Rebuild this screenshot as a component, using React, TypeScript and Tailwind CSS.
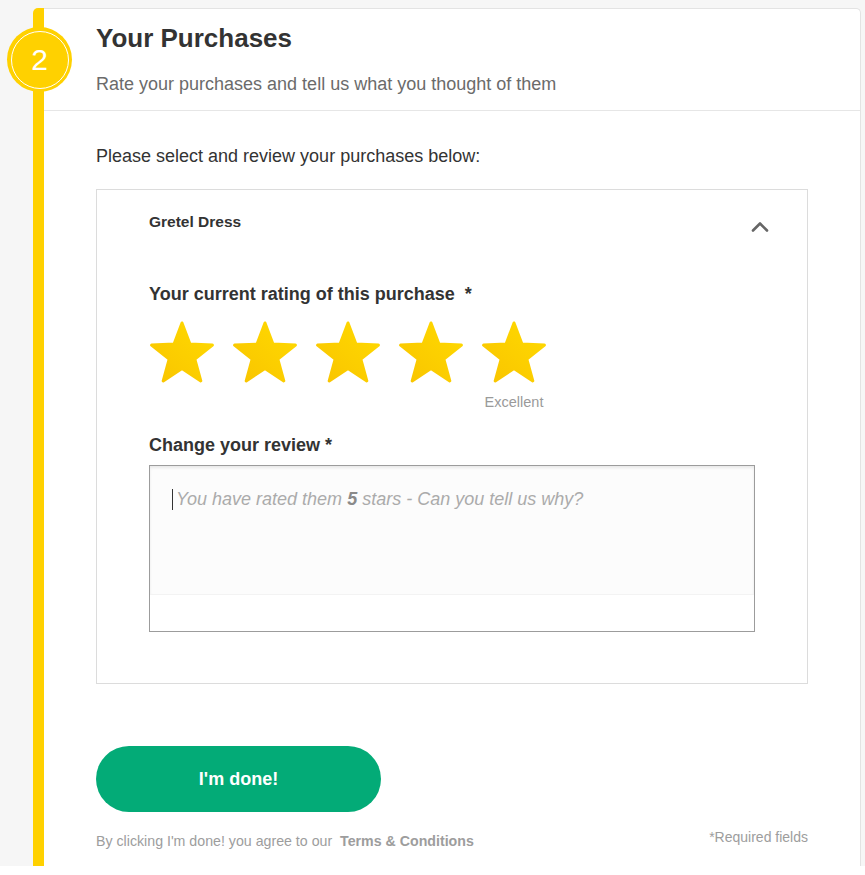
import React from "react";

const STAR_POINTS =
  "32,2 39.94,23.08 62.43,24.11 44.84,38.17 50.81,59.89 32,47.5 13.19,59.89 19.16,38.17 1.57,24.11 24.06,23.08";

function Star({ id }: { id: string }) {
  return (
    <svg width="64" height="62" viewBox="0 0 64 62">
      <defs>
        <linearGradient id={id} x1="0" y1="1" x2="1" y2="0">
          <stop offset="0%" stopColor="#f9c400" />
          <stop offset="100%" stopColor="#ffda00" />
        </linearGradient>
      </defs>
      <polygon
        points={STAR_POINTS}
        fill={`url(#${id})`}
        stroke={`url(#${id})`}
        strokeWidth={3}
        strokeLinejoin="round"
      />
    </svg>
  );
}

export default function App() {
  const stars = [1, 2, 3, 4, 5];

  return (
    <div className="w-[865px] h-[875px] bg-white font-['Liberation_Sans',Arial,sans-serif]">
      <div className="h-[866px] bg-[#f6f6f6] pt-2 pl-[33px] pr-[4px]">
        <div className="relative flex h-full">
          {/* yellow step rail */}
          <div className="w-[11px] shrink-0 bg-[#ffd100] rounded-tl-[5px]" />

          {/* step number badge */}
          <div className="absolute left-[-26px] top-[19px] w-[65px] h-[65px] rounded-full bg-[#ffd100] flex items-center justify-center">
            <div className="w-[58px] h-[58px] rounded-full border border-white flex items-center justify-center">
              <span className="text-white text-[30px] leading-none font-normal">2</span>
            </div>
          </div>

          <div className="flex-1 bg-white border-t border-r border-[#e3e3e3] rounded-tr-[5px] flex flex-col">
            {/* header */}
            <div className="border-b border-[#e6e6e6] pl-[52px] pt-[13px] pb-[14px]">
              <h1 className="text-[26px] leading-[32px] font-bold text-[#333]">Your Purchases</h1>
              <p className="mt-[18px] text-[18px] leading-[24px] text-[#6b6b6b]">
                Rate your purchases and tell us what you thought of them
              </p>
            </div>

            {/* body */}
            <div className="px-[52px] pt-[33px]">
              <p className="text-[18px] leading-[24px] text-[#333]">
                Please select and review your purchases below:
              </p>

              <div className="mt-[21px] border border-[#dcdcdc]">
                <div className="flex items-start justify-between pl-[52px] pr-[38px] pt-[22px]">
                  <span className="text-[15.5px] leading-[20px] font-bold text-[#333]">Gretel Dress</span>
                  <svg className="mt-[9px]" width="18" height="11" viewBox="0 0 18 11" fill="none">
                    <polyline
                      points="2,9.5 9,2.5 16,9.5"
                      stroke="#666"
                      strokeWidth={2.6}
                      strokeLinecap="round"
                      strokeLinejoin="round"
                    />
                  </svg>
                </div>

                <div className="px-[52px] pb-[51px]">
                  <p className="mt-[50px] text-[18px] leading-[24px] font-bold text-[#333]">
                    Your current rating of this purchase&nbsp;&nbsp;*
                  </p>

                  <div className="mt-[15px] ml-px flex gap-[19px]">
                    {stars.map((n) => (
                      <div key={n} className="flex flex-col items-center w-[64px]">
                        <Star id={`star-grad-${n}`} />
                        {n === 5 && (
                          <span className="mt-[10px] text-[14.5px] leading-[18px] text-[#9a9a9a] whitespace-nowrap">
                            Excellent
                          </span>
                        )}
                      </div>
                    ))}
                  </div>

                  <p className="mt-[22px] text-[18px] leading-[24px] font-bold text-[#333]">
                    Change your review *
                  </p>

                  <div className="mt-[8px] h-[167px] border border-[#9c9c9c] flex flex-col">
                    <div className="flex-1 bg-[#fcfcfc] shadow-[inset_0_2px_3px_rgba(0,0,0,0.08)] pl-[22px] pt-[21px]">
                      <div className="flex items-center">
                        <span className="w-px h-[21px] bg-[#333]" />
                        <span className="ml-[3px] text-[18px] leading-[24px] italic text-[#ababab]">
                          You have rated them <b className="font-bold text-[#8a8a8a]">5</b> stars - Can you tell us why?
                        </span>
                      </div>
                    </div>
                    <div className="h-[37px] bg-white border-t border-[#f3f3f3]" />
                  </div>
                </div>
              </div>

              <button
                type="button"
                className="mt-[62px] w-[285px] h-[66px] rounded-full bg-[#03ab77] text-white text-[18px] font-bold"
              >
                I'm done!
              </button>

              <div className="mt-[16px] flex items-end justify-between">
                <p className="pb-[2px] text-[14.2px] leading-[18px] text-[#9d9d9d]">
                  By clicking I'm done! you agree to our{" "}
                  <span className="ml-[4px] font-bold">Terms &amp; Conditions</span>
                </p>
                <span className="pb-[6px] text-[14px] leading-[18px] text-[#9d9d9d]">*Required fields</span>
              </div>
            </div>
          </div>
        </div>
      </div>
    </div>
  );
}
